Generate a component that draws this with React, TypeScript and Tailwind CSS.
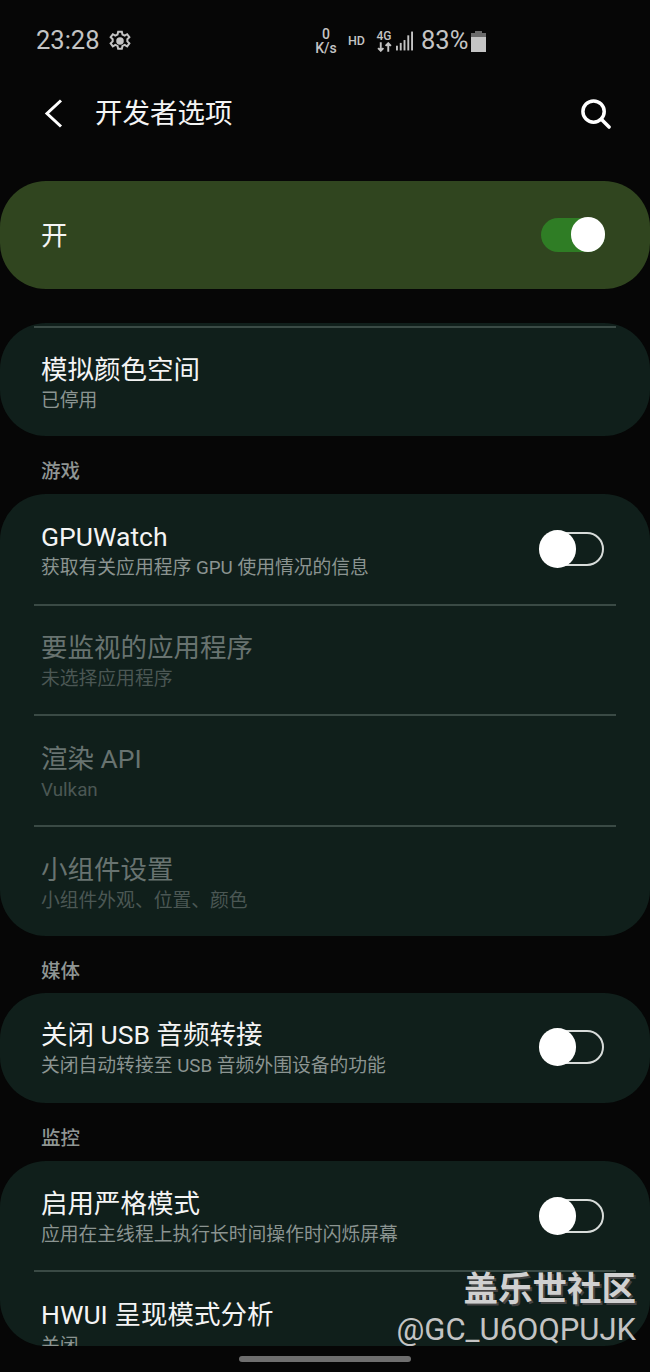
import React from 'react';

const Toggle: React.FC<{ on?: boolean }> = ({ on }) =>
  on ? (
    <div className="relative h-[34px] w-[64px] rounded-full bg-[#2f7d25]">
      <div className="absolute right-0 top-[-1px] h-[35px] w-[34px] rounded-full bg-white" />
    </div>
  ) : (
    <div className="relative mb-[2px] h-[34px] w-[64px] rounded-full border-2 border-[#d8dcda]">
      <div className="absolute left-[-3px] top-[-4px] h-[38px] w-[37px] rounded-full bg-white" />
    </div>
  );

const Row: React.FC<{ title: string; sub: string; dim?: boolean; toggle?: boolean; divider?: boolean; h?: string }> = ({
  title,
  sub,
  dim,
  toggle,
  divider,
  h = 'h-[111px]',
}) => (
  <div className={`relative flex items-center justify-between pl-[41px] pr-[46px] ${h}`}>
    <div className="flex flex-col">
      <div className={`text-[26.5px] leading-[36px] ${dim ? 'text-[#687370]' : 'text-[#f4f4f4]'}`}>{title}</div>
      <div className={`text-[18.8px] leading-[26px] ${dim ? 'text-[#4b5754]' : 'text-[#8b9491]'}`}>{sub}</div>
    </div>
    {toggle && <Toggle />}
    {divider && <div className="absolute bottom-0 left-[34px] right-[34px] h-[2px] bg-[#3a4a45]" />}
  </div>
);

const SectionLabel: React.FC<{ text: string; h?: string }> = ({ text, h = 'h-[58px]' }) => (
  <div className={`flex items-center pl-[41px] pt-[14px] text-[19.5px] font-medium text-[#8f9593] ${h}`}>{text}</div>
);

const StatusBar = () => (
  <div className="flex h-[80px] items-center pt-[2px] text-[#c4c4c4]">
    <span className="ml-[36px] w-[63px] text-[25.5px] leading-none">23:28</span>
    <svg className="ml-[10px]" width="22" height="22" viewBox="0 0 24 24" fill="none" stroke="#c4c4c4" strokeWidth="2.2">
      <path d="M10 2h4l.7 3 2.4 1.1 2.7-1.5 2.4 3.2-2.2 2.2v2.4l2.2 2.2-2.4 3.2-2.7-1.5-2.4 1.1-.7 3h-4l-.7-3-2.4-1.100-2.700 1.500-2.400-3.200 2.200-2.200v-2.400L1.800 7.800l2.400-3.200 2.700 1.500 2.400-1.100z" />
      <circle cx="12" cy="12" r="3" fill="#c4c4c4" />
    </svg>
    <div className="ml-[183px] flex w-[24px] flex-col items-center text-[14px] font-medium leading-[14px]">
      <span>0</span>
      <span>K/s</span>
    </div>
    <span className="ml-[10px] w-[18px] text-[12.5px] font-medium">HD</span>
    <div className="ml-[9px] flex w-[18px] flex-col items-center">
      <span className="text-[12px] font-medium leading-[12px]">4G</span>
      <svg width="15" height="10" viewBox="0 0 14 9" fill="none" stroke="#c4c4c4" strokeWidth="1.800">
        <path d="M3.500 0v8M1 5.500 3.500 8 6 5.500M10.500 9V1M8 3.500 10.500 1 13 3.500" />
      </svg>
    </div>
    <svg className="ml-[3px]" width="17" height="20" viewBox="0 0 18 20" fill="#c4c4c4">
      <rect x="0" y="15" width="2" height="5" />
      <rect x="4" y="12" width="2" height="8" />
      <rect x="8" y="9" width="2" height="11" />
      <rect x="12" y="4" width="2" height="16" />
      <rect x="16" y="0" width="2" height="20" />
    </svg>
    <span className="ml-[8px] text-[25.5px] leading-none">83%</span>
    <svg className="ml-[3px]" width="15" height="21" viewBox="0 0 15 21">
      <rect x="4" y="0" width="7" height="3" fill="#6a6a6a" />
      <rect x="0" y="2" width="15" height="4" fill="#6a6a6a" />
      <rect x="0" y="6" width="15" height="15" fill="#c4c4c4" />
    </svg>
  </div>
);

export default function App() {
  return (
    <div
      className="relative h-[1372px] w-[650px] overflow-hidden bg-[#060606]"
      style={{ fontFamily: 'Roboto, "Noto Sans CJK SC", sans-serif' }}
    >
      <StatusBar />

      <div className="flex h-[66px] items-center pt-[1px]">
        <svg className="ml-[44px]" width="19" height="29" viewBox="0 0 19 29" fill="none" stroke="#fff" strokeWidth="3">
          <path d="M17 1.500 3 14.500l14 13" />
        </svg>
        <span className="ml-[32px] text-[27.5px] text-[#f4f4f4]">开发者选项</span>
        <svg className="ml-auto mr-[39px]" width="31" height="31" viewBox="0 0 32 32" fill="none" stroke="#fff" strokeWidth="3.6">
          <circle cx="14" cy="14" r="11" />
          <path d="M22 22l8 8" strokeLinecap="round" />
        </svg>
      </div>

      <div className="mt-[35px] flex h-[108px] items-center justify-between rounded-[46px] bg-[#30451f] pl-[41px] pr-[45px]">
        <span className="pt-[2px] text-[26.5px] text-[#f4f4f4]">开</span>
        <Toggle on />
      </div>

      <div className="relative mt-[34px] rounded-[46px] bg-[#101f1b]">
        <div className="absolute left-[34px] right-[34px] top-[3px] h-[2px] bg-[#3a4a45]" />
        <Row title="模拟颜色空间" sub="已停用" h="h-[113px] pt-[6px]" />
      </div>

      <SectionLabel text="游戏" />
      <div className="rounded-[46px] bg-[#101f1b]">
        <Row title="GPUWatch" sub="获取有关应用程序 GPU 使用情况的信息" toggle divider h="h-[112px]" />
        <Row title="要监视的应用程序" sub="未选择应用程序" dim divider h="h-[110px]" />
        <Row title="渲染 API" sub="Vulkan" dim divider />
        <Row title="小组件设置" sub="小组件外观、位置、颜色" dim h="h-[109px] pt-[2px]" />
      </div>

      <SectionLabel text="媒体" h="h-[57px]" />
      <div className="rounded-[46px] bg-[#101f1b]">
        <Row title="关闭 USB 音频转接" sub="关闭自动转接至 USB 音频外围设备的功能" toggle h="h-[110px]" />
      </div>

      <SectionLabel text="监控" />
      <div className="h-[185px] overflow-hidden rounded-[46px] bg-[#101f1b]">
        <Row title="启用严格模式" sub="应用在主线程上执行长时间操作时闪烁屏幕" toggle divider />
        <Row title="HWUI 呈现模式分析" sub="关闭" />
      </div>

      <div className="absolute bottom-[10px] left-[239px] h-[6px] w-[172px] rounded-full bg-[#6e6e6e]" />

      <div className="absolute right-[14px] top-[1267px] flex flex-col items-end">
        <span className="text-[34.5px] font-bold leading-[44px] text-[#d0d0d0] [text-shadow:2px_2px_0_#444]">盖乐世社区</span>
        <span className="text-[31px] leading-[38px] text-[#c4c4c4]">@GC_U6OQPUJK</span>
      </div>
    </div>
  );
}
